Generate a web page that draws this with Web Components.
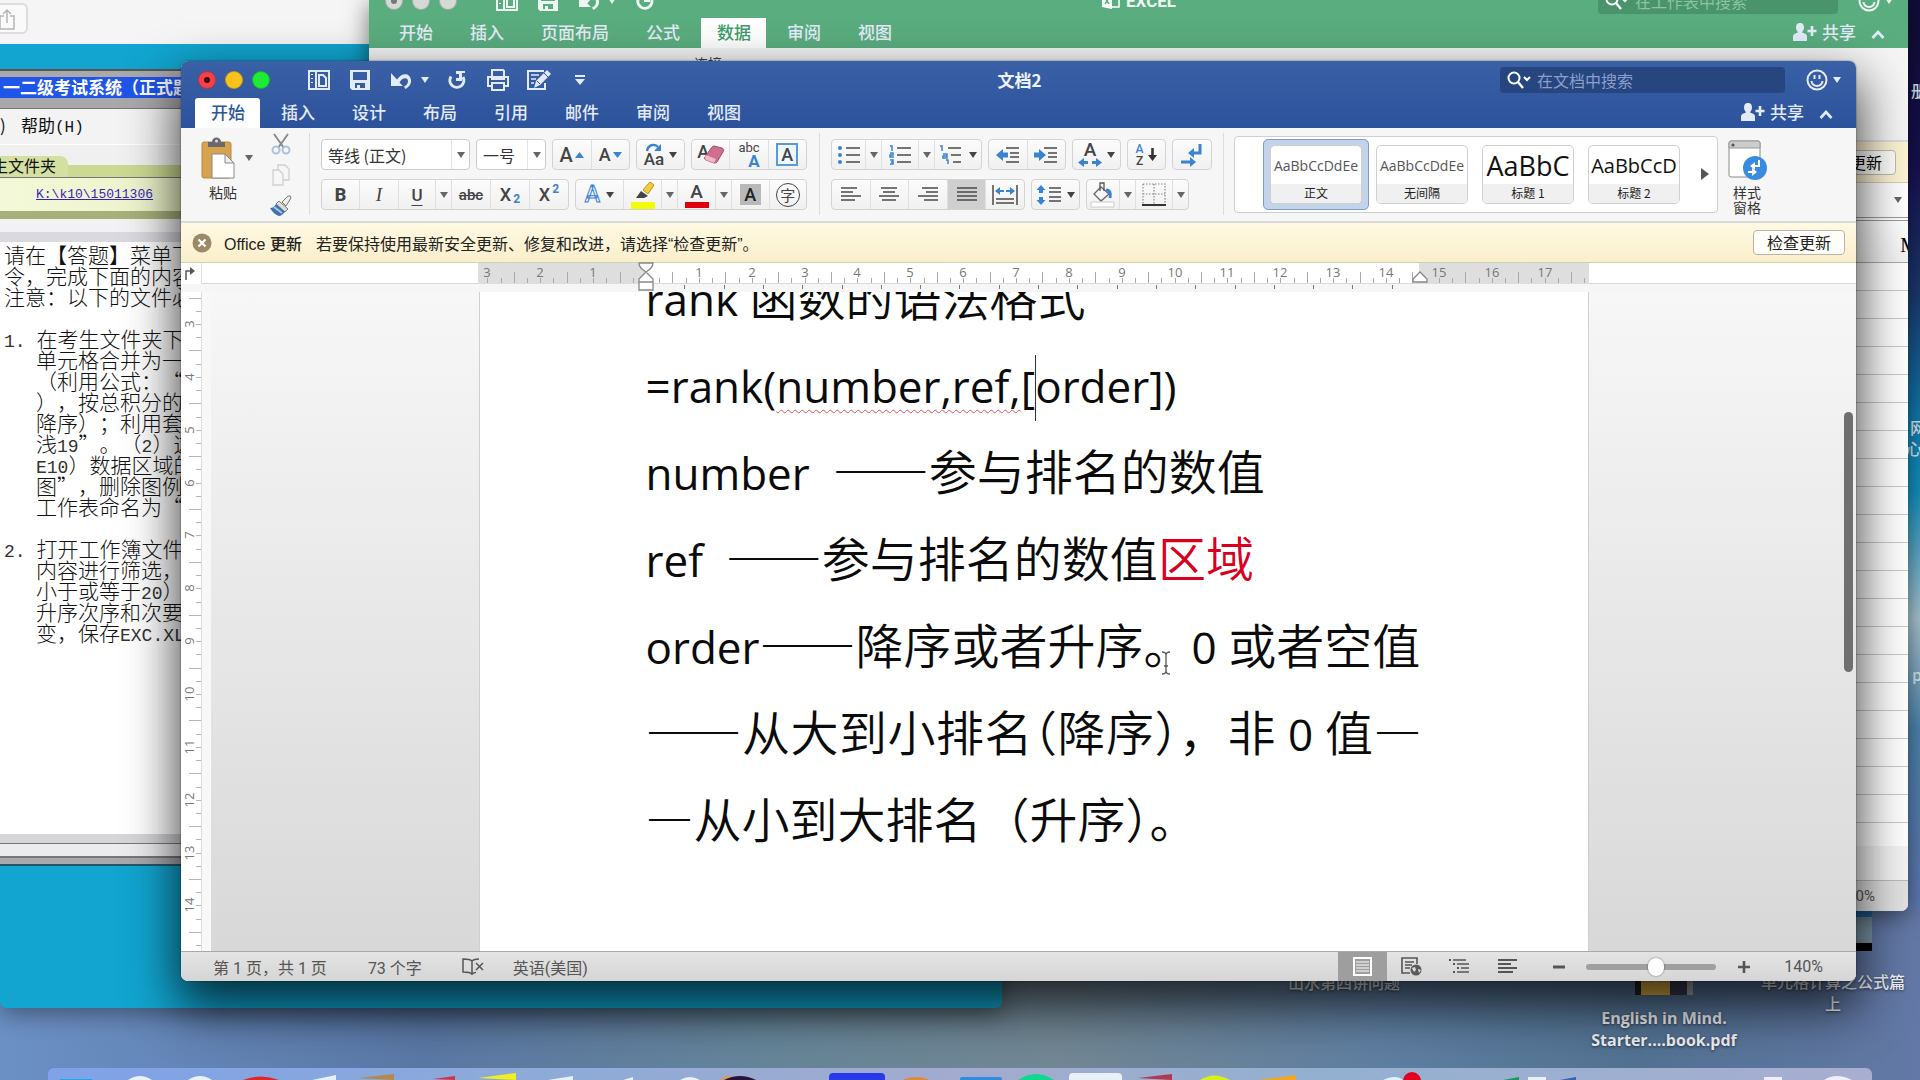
<!DOCTYPE html>
<html lang="zh-CN">
<head>
<meta charset="utf-8">
<title>文档2</title>
<style>
html,body{margin:0;height:100%;overflow:hidden}
body{font-family:"Liberation Sans","Noto Sans CJK SC",sans-serif;background:#5f7f9e}
</style>
</head>
<body>
<mac-desktop></mac-desktop>
<script>
const define=(name,css,html,after)=>{
  const t=document.createElement('template');
  t.innerHTML=`<style>*{box-sizing:border-box}${css}</style>${html}`;
  customElements.define(name,class extends HTMLElement{
    connectedCallback(){
      if(this.shadowRoot)return;
      this.attachShadow({mode:'open'}).appendChild(t.content.cloneNode(true));
      if(after)after.call(this,this.shadowRoot);
    }
  });
};

const B='#3b82d0',D='#4a4a4a';
const lines=(arr,c=D,w=1.6)=>`<path fill="none" stroke="${c}" stroke-width="${w}" d="${arr.map(([x,y,l])=>`M${x} ${y}h${l}`).join('')}"/>`;
/* name: [width, height, markup] */
const ICONS={
  caret:[8,6,`<path d="M0 0h8L4 6z" fill="currentColor"/>`],
  up:[14,9,`<path d="M1.500 8L7 2l5.500 6" fill="none" stroke="currentColor" stroke-width="2.600"/>`],
  more:[10,10,`<path d="M0 1h10" stroke="currentColor" stroke-width="2"/><path d="M0 4h10L5 10z" fill="currentColor"/>`],
  layout:[22,20,`<g fill="none" stroke="currentColor" stroke-width="2"><path d="M1 1h20v18H1zM8 1v18"/><path d="M11 5h4l3 3v8h-7z"/></g><path d="M4 4v1M4 8v1M4 12v1" stroke="currentColor" stroke-width="2"/>`],
  save:[20,20,`<path fill="currentColor" fill-rule="evenodd" d="M0 0h20v20H2l-2-2zM3 2v8h14V2zM5 13v5h2v-3h3v3h5v-5z"/>`],
  undo:[22,18,`<path d="M1 2v13h12L9.500 11.500C12 6 18 6 18 10c0 3-2 4.500-4 5.500l1.500 2.500C19 16 21.500 13 21 9 20 2 12 1 7 8.500z" fill="currentColor"/>`],
  redo:[18,20,`<path d="M3 6.500A7 7 0 1 0 15 7" fill="none" stroke="currentColor" stroke-width="3"/><path d="M8 1h9v2h-3v8H8V8h3V4H8z" fill="currentColor"/>`],
  print:[24,22,`<g fill="none" stroke="currentColor" stroke-width="2"><path d="M6 8V1h11l1 1v6M6 17H2V8h20v9h-4"/><path d="M6 14h12v7H6z"/></g><path d="M5 10h14" stroke="currentColor" stroke-width="2"/>`],
  edit:[26,22,`<path d="M18 2H2v18h17v-6" fill="none" stroke="currentColor" stroke-width="2"/><path d="M5 6h8M5 10h5M5 14h3" stroke="currentColor" stroke-width="1.500"/><path d="M10 12L21 1l4 4-11 11-6 3z" fill="currentColor"/><path d="M11 12l3 3M18 4l4 4" stroke="#2f569d"/>`],
  search:[24,20,`<circle cx="7" cy="8" r="5.500" fill="none" stroke="currentColor" stroke-width="2"/><path d="M11 12l5 6" stroke="currentColor" stroke-width="2.400"/><path d="M17 7l3 3 3-3" fill="none" stroke="currentColor" stroke-width="2"/>`],
  smile:[22,22,`<g fill="none" stroke="currentColor" stroke-width="2"><circle cx="11" cy="11" r="9.500"/><path d="M5.500 12a5.500 5 0 0 0 11 0"/><path d="M8.500 6v4M13.500 6v4"/></g>`],
  person:[24,18,`<path fill="currentColor" d="M7 0c3 0 4 2 4 4.500S9.500 8 9 9.500c3 1 5 1.500 5 4V18H0v-4.500c0-2.500 2-3 5-4C4.500 8 3 7 3 4.500S4 0 7 0z"/><path d="M19 3v10M14.500 8h9" stroke="currentColor" stroke-width="2.600"/>`],
  paste:[34,42,`<rect x="1" y="5" width="29" height="36" rx="2" fill="#d6a350" stroke="#b98a3e"/><path d="M7 10V5h4c0-6 9-6 9 0h4v5z" fill="#69696b"/><circle cx="15.500" cy="4" r="1.500" fill="#ddd"/><path d="M11 17h13l9 9v15H11z" fill="#fff" stroke="#888"/><path d="M24 17v9h9z" fill="#eee" stroke="#888"/>`],
  cut:[20,22,`<path d="M3 1l10 14M17 1L7 15" stroke="#8b8b8b" stroke-width="2"/><g fill="none" stroke="#a9c3dc" stroke-width="2"><circle cx="5" cy="17" r="3.500"/><circle cx="15" cy="17" r="3.500"/></g>`],
  copy:[20,22,`<g fill="#f6f6f6" stroke="#cfcfcf" stroke-width="1.300"><path d="M7 1h7l4 4v11H7z"/><path d="M2 6h6l4 4v11H2z"/></g>`],
  brush:[24,22,`<path d="M13 7l6-6q3-1 3 2l-5 8z" fill="#eee" stroke="#777"/><path d="M10 6l9 8-3 3-9-8z" fill="#ddd" stroke="#777"/><path d="M7 9l9 8c-2 2-4 4-6 4-3-1-7-4-9-8 3 0 5-2 6-4z" fill="#3e72b0"/><path d="M5 12l8 6" stroke="#a9c6e6" stroke-width="2" fill="none"/>`],
  triup:[9,6,`<path d="M0 6h9L4.500 0z" fill="${B}"/>`],
  tridn:[9,6,`<path d="M0 0h9L4.500 6z" fill="${B}"/>`],
  turn:[16,9,`<path d="M1 8C2 2 8 0 12 4" fill="none" stroke="${B}" stroke-width="2.400"/><path d="M15 1v7H8z" fill="${B}"/>`],
  eraser:[22,20,`<path d="M10 2c1-1 1-1 2-1l8 2c2 1 2 2 1 4l-6 10c-1 1-2 1-3 1l-8-3c-2-1-2-2-1-3z" fill="#cf6f8f" stroke="#a34d6d"/><path d="M4 10l10 4-2 4-8-3q-2-2 0-5z" fill="#f2b8c8"/>`],
  marker:[26,28,`<rect x="1" y="21" width="24" height="7" fill="#f4fb08"/><path d="M13 9l7-8 4 3-6 9z" fill="#f2cd3c" stroke="#b98f1a"/><path d="M11 10l7 5-4 2H6z" fill="#444"/>`],
  bullets:[22,18,`<g fill="${B}"><circle cx="2" cy="2" r="2"/><circle cx="2" cy="9" r="2"/><circle cx="2" cy="16" r="2"/></g>${lines([[8,2,14],[8,9,14],[8,16,14]])}`],
  numbers:[21,20,`<path fill="none" stroke="${B}" stroke-width="1.500" d="M0 1h2v5M0 8h3v2H0v2h4M0 15h3v4H0M1 17h2"/>${lines([[7,3,14],[7,10,14],[7,17,14]])}`],
  levels:[22,20,`<path fill="none" stroke="${B}" stroke-width="1.500" d="M0 1h2v5M3 9h4v4H3v-2h4M6 15h2v4"/>${lines([[8,3,13],[11,10,10],[13,17,8]])}`],
  outdent:[24,16,`<path d="M0 8l7-6v3.500h5v5H7V14z" fill="${B}"/>${lines([[10,1,13],[14,6,9],[14,10,9],[10,15,13]])}`],
  indent:[24,16,`<path d="M12 8L5 2v3.500H0v5h5V14z" fill="${B}"/>${lines([[10,1,13],[14,6,9],[14,10,9],[10,15,13]])}`],
  lr:[24,9,`<path d="M0 4.500L6 0v3h4v3H6v3zM24 4.500L18 0v3h-4v3h4v3z" fill="${B}"/>`],
  down:[9,14,`<path d="M3.200 0h2.600v7H9l-4.500 6L0 7h3.200z" fill="#333"/>`],
  marks:[24,24,`<path d="M20 1v9h-8" fill="none" stroke="${B}" stroke-width="3"/><path d="M8 10l6-5v10zM16 19l-6-5v10z" fill="${B}"/><path d="M1 19h11" stroke="${B}" stroke-width="3"/>`],
  left:[20,15,lines([[0,1,16],[0,5,12],[0,9,20],[0,13,14]])],
  center:[20,15,lines([[2,1,16],[4,5,12],[0,9,20],[3,13,14]])],
  right:[20,15,lines([[4,1,16],[8,5,12],[0,9,20],[6,13,14]])],
  just:[20,15,lines([[0,1,20],[0,5,20],[0,9,20],[0,13,20]])],
  dist:[26,20,`<path d="M1 0v20M25 0v20" stroke="${D}" stroke-width="1.500"/><path d="M3 6l5-4v3h4v2H8v3zM23 6l-5-4v3h-4v2h4v3z" fill="${B}"/>${lines([[4,14,18],[4,18,18]])}`],
  spacing:[24,20,`<path d="M4 0l4.500 5H6v3H2V5H-.500zM4 20l4.500-5H6v-3H2v3H-.500z" fill="${B}"/>${lines([[12,3,12],[12,7,12],[12,12,12],[12,16,12]])}`],
  bucket:[26,26,`<path d="M11 5l8 7-8 7-7-7z" fill="#f5f5f5" stroke="#666" stroke-width="1.300"/><path d="M10 9V1h4v8" fill="none" stroke="#555" stroke-width="1.300"/><path d="M16 8c4 0 5 3 4 8" fill="none" stroke="${B}" stroke-width="3"/><path d="M1 20h23v5H1z" fill="#fff" stroke="#ccc"/>`],
  borders:[24,24,`<path d="M1 1h22v20M1 1v20M12 1v20M1 11h22" fill="none" stroke="#888" stroke-width="1.200" stroke-dasharray="1.500 1.500"/><path d="M0 22h24" stroke="#333" stroke-width="2"/>`],
  play:[8,12,`<path d="M0 0l8 6-8 6z" fill="#555"/>`],
  pane:[40,40,`<rect x="1" y="1" width="31" height="36" rx="2" fill="#fff" stroke="#8a8a8a"/><path d="M1 3q0-2 2-2h27q2 0 2 2v5H1z" fill="#ccc" stroke="#999"/><circle cx="5" cy="5" r="1.600" fill="#555"/><circle cx="27" cy="28" r="12" fill="#3a8ae0"/><path d="M31 20v6h-6M20 32h5" fill="none" stroke="#fff" stroke-width="2"/><path d="M27 22v8l-5-4zM24 28l5 4-5 4z" fill="#fff"/>`],
  close:[20,20,`<circle cx="10" cy="10" r="9.500" fill="#9c8a66"/><path d="M6.500 6.500l7 7M13.500 6.500l-7 7" stroke="#fff" stroke-width="2.200"/>`],
  tabstop:[10,14,`<path d="M1 13V4h6" fill="none" stroke="#555" stroke-width="1.500"/><path d="M5 0l5 4-5 4z" fill="#555"/>`],
  proof:[22,18,`<path d="M10 3C8 1 4 1 1 1v13c3 0 7 0 9 2 1-1 2-1.500 4-1.500M10 3v14M10 3c2-2 4-2 7-2" fill="none" stroke="#555" stroke-width="1.500"/><path d="M14 5l7 7M21 5l-7 7" stroke="#555" stroke-width="1.500"/>`],
  vprint:[19,19,`<rect x="1" y="1" width="17" height="17" fill="none" stroke="#fff" stroke-width="2"/><path d="M3 5h13M3 8h13M3 11h13M3 14h13" stroke="#fff"/>`],
  vweb:[21,19,`<path d="M9 16H1V1h15v6" fill="none" stroke="#555" stroke-width="1.600"/><path d="M4 5h9M4 8h7M4 11h5" stroke="#555" stroke-width="1.400"/><circle cx="15" cy="13" r="5.500" fill="#5a5a5a"/><path d="M11 11l3-1 1 3-2 2zM17 12l3 1-2 3z" fill="#ddd"/>`],
  vout:[20,15,`<path d="M0 1h2M4 5h2M8 9h2M4 13h2" stroke="#555" stroke-width="1.800"/>${lines([[4,1,13],[8,5,12],[12,9,8],[8,13,12]],'#555')}`],
  vdraft:[19,15,lines([[0,1,19],[0,5,13],[0,9,19],[0,13,15]],'#555',1.800)],
  minus:[12,4,`<path d="M0 2h12" stroke="#555" stroke-width="3"/>`],
  plus:[12,12,`<path d="M0 6h12M6 0v12" stroke="#555" stroke-width="2.600"/>`],
  share:[16,22,`<path d="M4 8H0v13h14V8h-4M7 15V2M3 6l4-4 4 4" fill="none" stroke="#b5b5b5" stroke-width="1.500"/>`],
  ibeam:[10,24,`<path d="M1 1q4 0 4 3v16q0 3-4 3M9 1q-4 0-4 3M9 23q-4 0-4-3M3 15h4" fill="none" stroke="#555" stroke-width="1.300"/>`],
  xl:[18,16,`<path d="M0 2l10-2v16L0 14z" fill="#fff"/><path d="M10 2h7v12h-7" fill="none" stroke="#fff" stroke-width="1.500"/><path d="M3 5l4 6M7 5l-4 6" stroke="#5aad7f" stroke-width="1.500"/>`]
};
define('ui-icon',`:host{display:inline-flex;flex:none}svg{display:block;overflow:visible}`,``,function(r){
  const [w,h,m]=ICONS[this.getAttribute('name')];
  r.innerHTML+=`<svg width="${w}" height="${h}" viewBox="0 0 ${w} ${h}" aria-hidden="true">${m}</svg>`;
});
const ic=n=>`<ui-icon name="${n}"></ui-icon>`;

define('traffic-lights',`:host{display:flex;gap:9px}
i{width:18px;height:18px;border-radius:50%;border:1px solid #0003;display:grid;place-items:center}
i:nth-of-type(1){background:#f2414c}i:nth-of-type(2){background:#fcc21b}i:nth-of-type(3){background:#1fea35}
i b{width:6px;height:6px;border-radius:50%;background:#4a0508}
:host([off]) i{background:#d5d9d6}:host([off]) b{background:#777}`,`<i><b></b></i><i></i><i></i>`);

define('search-box',`:host{display:flex;align-items:center;height:26px;border-radius:4px;background:var(--sb);padding-left:7px;gap:6px;color:#fff}
input{flex:1;min-width:0;border:0;background:none;font:16px "Noto Sans CJK SC",sans-serif;color:#fff;outline:0;padding:0}
input::placeholder{color:var(--ph);opacity:1}`,`${ic('search')}<input type="search" aria-label="搜索">`,function(r){r.querySelector('input').placeholder=this.getAttribute('hint')});

define('ribbon-tabs',`:host{display:flex;align-items:flex-end;height:30px}
nav{display:flex}
button{border:0;background:none;color:#e4ebf8;font:500 17px/28px "Noto Sans CJK SC",sans-serif;height:30px;padding:0 0 2px;margin-right:37px;white-space:nowrap}
button.on{background:#fff;color:var(--tab);padding:0 15px 2px 16px;margin:0 21px 0 -16px}
button.on.first{margin-left:0;border-radius:3px 3px 0 0}
.share{margin-left:auto;display:flex;align-items:center;gap:5px;margin-right:15px}
.share+button{margin-right:23px}`,`<nav></nav><button class="share">${ic('person')}<span>共享</span></button><button aria-label="折叠功能区">${ic('up')}</button>`,function(r){
  const on=this.getAttribute('on');
  r.querySelector('nav').innerHTML=this.getAttribute('tabs').split(' ').map((t,i)=>`<button class="${t===on?'on':''}${i?'':' first'}">${t}</button>`).join('');
});

define('tool-group',`:host{display:flex;height:31px;border:1px solid #d3d3d3;border-radius:4px;background:linear-gradient(#fcfcfc,#f0f0f0);overflow:hidden}
::slotted(button){border:0;border-right:1px solid #e0e0e0;background:none;padding:0;display:flex;align-items:center;justify-content:center;gap:2px;color:#444;height:100%;flex:1}
::slotted(button:last-child){border-right:0}::slotted(.c){flex:0 0 16px;color:#666}::slotted(.on){background:#cfcfcf}`,`<slot></slot>`);

define('combo-box',`:host{display:flex;position:relative;height:31px;border:1px solid #ccc;border-radius:4px;background:#fff;align-items:center;color:#666}
select{appearance:none;border:0;background:none;font:16px "Noto Sans CJK SC",sans-serif;color:#333;padding:0 0 0 6px;flex:1;min-width:0;height:100%;outline:0}
i{width:18px;height:100%;border-left:1px solid #e4e4e4;display:grid;place-items:center;pointer-events:none}`,`<select></select><i>${ic('caret')}</i>`,function(r){
  const s=r.querySelector('select');s.setAttribute('aria-label',this.getAttribute('label'));s.add(new Option(this.getAttribute('value')));
});

define('style-card',`:host{display:block;padding:5px 6px;border:1px solid transparent;border-radius:5px;width:106px;height:71px}
:host([on]){background:#c3d3ea;border-color:#7d9cc9}
button{width:100%;height:100%;border:1px solid #cfcfcf;border-radius:5px;background:#fff;padding:0;display:flex;flex-direction:column;overflow:hidden;color:#222}
.s{flex:1;display:flex;align-items:center;justify-content:center;font-family:"Open Sans","Noto Sans CJK SC",sans-serif;white-space:nowrap;width:100%;overflow:hidden}
.l{height:19px;width:100%;background:#f0f0f0;font:12px/18px "Noto Sans CJK SC",sans-serif}`,`<button><span class="s"></span><span class="l"></span></button>`,function(r){
  const s=r.querySelector('.s');s.textContent=this.getAttribute('sample');s.style.fontSize=this.getAttribute('size')+'px';s.style.fontWeight=this.getAttribute('weight')||400;s.style.color=this.hasAttribute('weight')?'#111':'#555';
  r.querySelector('.l').textContent=this.getAttribute('name');
});

define('word-ribbon',`:host{display:flex;height:95px;background:#f6f6f6;border-bottom:2px solid #d9d9d9;padding:5px 0 0 20px;font-family:"Noto Sans CJK SC",sans-serif}
button{font-family:"Noto Sans CJK SC",sans-serif}
.plain{border:0;background:none;padding:0;color:#333}
.paste{display:flex;align-items:center;gap:10px;margin-top:4px;height:42px;color:#666}
.col{display:flex;flex-direction:column}
.t{font-size:14px;line-height:15px;color:#333}
.clip{width:69px}.clip .t{margin:4px 0 0 8px;line-height:18px}
.edit{width:22px;gap:9px;align-items:center}
.edit button{height:22px;display:flex}
hr{border:0;width:1px;height:82px;background:#dcdcdc;margin:0 11px 0 0}
.rows{display:flex;flex-direction:column;gap:9px;padding-top:6px}
.row{display:flex;gap:6px}
.big{font:500 20px/24px Roboto,sans-serif}
.mid{font:500 18px/24px Roboto,sans-serif}
sub,sup{font:700 12px/12px Roboto,sans-serif;color:#3b82d0}sub{align-self:flex-end;margin-bottom:4px}sup{align-self:flex-start;margin-top:3px}
.st{display:flex;flex-direction:column;align-items:center}
.gal{display:flex;align-items:center;background:#fff;border:1px solid #cfcfcf;border-radius:4px;height:77px;margin-top:3px;width:484px;padding-left:28px}
.gal .plain{margin-left:14px}
.pane{margin:7px 0 0 10px;width:40px;align-items:center}.pane .t{width:30px;margin-top:5px}
`,`
<div class="col clip"><button class="plain paste" aria-label="粘贴">${ic('paste')}${ic('caret')}</button><span class="t">粘贴</span></div>
<div class="col edit"><button class="plain" aria-label="剪切">${ic('cut')}</button><button class="plain" aria-label="复制">${ic('copy')}</button><button class="plain" aria-label="格式刷">${ic('brush')}</button></div>
<hr style="margin-left:17px">
<div class="rows">
 <div class="row">
  <combo-box style="width:149px" label="字体" value="等线 (正文)"></combo-box><combo-box style="width:70px" label="字号" value="一号"></combo-box>
  <tool-group style="width:78px"><button><span class="big">A</span>${ic('triup')}</button><button><span class="mid">A</span>${ic('tridn')}</button></tool-group>
  <tool-group style="width:49px"><button style="gap:5px"><span class="st">${ic('turn')}<span style="font:500 17px/14px Roboto,sans-serif">Aa</span></span>${ic('caret')}</button></tool-group>
  <tool-group style="width:116px"><button style="gap:0"><span class="mid" style="margin-right:-7px;align-self:flex-start">A</span>${ic('eraser')}</button><button><span class="st" style="font:13px/12px Roboto,sans-serif">abc<b style="font:700 17px/14px Roboto,sans-serif;color:#3b82d0;align-self:flex-end">A</b></span></button><button><span style="border:2px solid #5b9ad8;background:#eef6fd;font:500 18px/19px Roboto,sans-serif;width:22px">A</span></button></tool-group>
 </div>
 <div class="row">
  <tool-group style="width:248px"><button style="flex:0 0 38px"><b style="font:800 18px Roboto,sans-serif">B</b></button><button style="flex:0 0 39px"><i style="font:italic 500 19px 'Liberation Serif',serif">I</i></button><button style="flex:0 0 37px"><u style="font:500 17px Roboto,sans-serif;text-underline-offset:4px">U</u></button><button class="c">${ic('caret')}</button><button style="flex:0 0 39px"><s style="font:500 15px Roboto,sans-serif">abc</s></button><button style="flex:0 0 39px"><span class="mid">X</span><sub>2</sub></button><button><span class="mid">X</span><sup>2</sup></button></tool-group>
  <tool-group style="width:232px"><button style="flex:0 0 48px;gap:6px"><span style="font:500 23px Roboto,sans-serif;color:#f4faff;-webkit-text-stroke:1px #3b82d0">A</span>${ic('caret')}</button><button style="flex:0 0 38px">${ic('marker')}</button><button class="c">${ic('caret')}</button><button style="flex:0 0 38px"><span style="font:500 19px/20px Roboto,sans-serif;border-bottom:6px solid #e00010;width:24px">A</span></button><button class="c">${ic('caret')}</button><button><span style="background:#b9b9b9;font:500 18px/21px Roboto,sans-serif;width:21px;color:#222">A</span></button><button><span style="border:1px solid #444;border-radius:50%;width:24px;height:24px;font-size:15px;line-height:21px">字</span></button></tool-group>
 </div>
</div>
<hr style="margin-left:12px">
<div class="rows">
 <div class="row">
  <tool-group style="width:151px"><button style="flex:0 0 34px">${ic('bullets')}</button><button class="c">${ic('caret')}</button><button style="flex:0 0 37px">${ic('numbers')}</button><button class="c">${ic('caret')}</button><button style="gap:7px">${ic('levels')}${ic('caret')}</button></tool-group>
  <tool-group style="width:78px"><button>${ic('outdent')}</button><button>${ic('indent')}</button></tool-group>
  <tool-group style="width:49px"><button style="gap:5px"><span class="st"><span style="font:500 19px/16px Roboto,sans-serif">A</span>${ic('lr')}</span>${ic('caret')}</button></tool-group>
  <tool-group style="width:39px"><button style="gap:5px"><span class="st" style="font:500 12px/12px Roboto,sans-serif"><span style="color:#3b82d0">A</span><span>Z</span></span>${ic('down')}</button></tool-group>
  <tool-group style="width:40px"><button>${ic('marks')}</button></tool-group>
 </div>
 <div class="row">
  <tool-group style="width:194px"><button>${ic('left')}</button><button>${ic('center')}</button><button>${ic('right')}</button><button class="on">${ic('just')}</button><button>${ic('dist')}</button></tool-group>
  <tool-group style="width:49px"><button style="gap:6px">${ic('spacing')}${ic('caret')}</button></tool-group>
  <tool-group style="width:103px"><button style="flex:0 0 33px">${ic('bucket')}</button><button class="c">${ic('caret')}</button><button style="flex:0 0 37px">${ic('borders')}</button><button class="c">${ic('caret')}</button></tool-group>
 </div>
</div>
<hr style="margin-left:11px;margin-right:10px">
<div class="gal"><style-card on sample="AaBbCcDdEe" size="14" name="正文"></style-card><style-card sample="AaBbCcDdEe" size="14" name="无间隔"></style-card><style-card sample="AaBbC" size="27" weight="500" name="标题 1"></style-card><style-card sample="AaBbCcD" size="20" weight="400" name="标题 2"></style-card><button class="plain" aria-label="更多样式">${ic('play')}</button></div>
<div class="col pane">${ic('pane')}<span class="t">样式窗格</span></div>`);

define('word-title',`:host{display:grid;grid-template-columns:1fr auto 1fr;height:37px;align-items:center;color:#e4ebf8;padding:0 15px 0 17px}
.q{display:flex;align-items:center}.q button{border:0;background:none;padding:0;color:inherit;display:flex;align-items:center}
h1{font:700 17px/22px "Noto Sans CJK SC",sans-serif;margin:0;color:#f0f4fc}
.r{justify-content:flex-end}search-box{--sb:#27457f;--ph:#8b9fc8;width:285px;margin-right:21px}`,`
<div class="q"><traffic-lights></traffic-lights><button style="margin-left:38px">${ic('layout')}</button><button style="margin-left:20px">${ic('save')}</button><button style="margin-left:20px;gap:9px">${ic('undo')}${ic('caret')}</button><button style="margin-left:19px">${ic('redo')}</button><button style="margin-left:20px">${ic('print')}</button><button style="margin-left:16px">${ic('edit')}</button><button style="margin-left:23px">${ic('more')}</button></div>
<h1>文档2</h1>
<div class="q r"><search-box hint="在文档中搜索"></search-box><button style="gap:5px">${ic('smile')}${ic('caret')}</button></div>`);

define('update-bar',`:host{display:flex;align-items:center;height:40px;background:linear-gradient(#fff9e3,#faefcb);border-bottom:1px solid #d5cfb8;padding:0 11px 0 11px;font:16px "Liberation Sans","Noto Sans CJK SC",sans-serif;color:#222}
strong{font-weight:500;margin:0 14px 0 12px}p{margin:0;flex:1}
button{width:92px;height:25px;border:1px solid #b9b6a8;border-radius:4px;background:#fffefa;padding:0;font:16px/21px "Noto Sans CJK SC",sans-serif;color:#222}`,`${ic('close')}<strong>Office 更新</strong><p>若要保持使用最新安全更新、修复和改进，请选择“检查更新”。</p><button>检查更新</button>`);

const PITCH=52.86;
define('h-ruler',`:host{display:flex;height:29px;background:#f6f6f6}
.c{width:21px;height:21px;padding:4px 0 0 4px;background:#fff;border-right:1px solid #e3e3e3}
.m{flex:1;height:21px;background:#fff;border-bottom:1px solid #d9d9d9;padding-left:9px;display:flex;justify-content:center}
svg{overflow:visible;display:block}`,`<div class="c">${ic('tabstop')}</div><div class="m"></div>`,function(r){
  const z=168;let s=`<path d="M0 0h${z}v21H0zM${z+773} 0h170v21h-170z" fill="#dedede"/>`,k='';
  for(let q=-12;q<72;q++){const x=Math.round(z+q*PITCH/4);if(x<1||x>1110)continue;
    k+=`M${x}.500 ${q%4===2||q%4===-2?9:15}V20`;
    if(q%4===0&&q)s+=`<text x="${x}" y="14">${Math.abs(q/4)}</text>`;}
  s+=`<path d="${k}" stroke="#aaa" fill="none"/>`;
  let t='';for(let i=1;i<20;i++)t+=`M${Math.round(z-1+i*39.300)}.500 22v4`;
  s+=`<path d="${t}" stroke="#777"/><g fill="#fff" stroke="#888" stroke-width="1.300"><path d="M${z-7} 0h14q0 5-7 9q-7-4-7-9zM${z-7} 19v-3l7-7 7 7v3zM${z-7} 19h14v8h-14zM${z+767} 19v-3l7-7 7 7v3z"/></g>`;
  r.querySelector('.m').innerHTML=`<svg width="1112" height="21" font-family="Open Sans" font-size="13" fill="#777" text-anchor="middle">${s}</svg>`;
});
define('v-ruler',`:host{display:block;width:30px;background:linear-gradient(90deg,#fff 0 20px,#ddd 20px 21px,#f8f8f8 21px);overflow:hidden}svg{display:block}`,``,function(r){
  let s='',k='';
  for(let q=-2;q<50;q++){const y=Math.round(32+q*PITCH/4);if(y<2)continue;
    k+=`M${q%4===2||q%4===-2?8:15} ${y}.500H20`;
    if(q%4===0&&y<640)s+=`<text transform="translate(13 ${y}) rotate(-90)">${3+q/4}</text>`;}
  r.innerHTML+=`<svg width="21" height="658" font-family="Open Sans" font-size="13" fill="#777" text-anchor="middle"><path d="${k}" stroke="#b5b5b5"/>${s}</svg>`;
});

define('word-page',`:host{display:block;width:1110px;background:#fff;border:solid #cfcfcf;border-width:0 1px;overflow:hidden;color:#0b0b0b;padding-left:166px}
div{margin-top:-40px}
p{margin:0;height:87px;width:776px;font:350 48px/87px "Noto Sans CJK SC DemiLight","Noto Sans CJK SC",sans-serif;white-space:pre}
i{font:400 44px/80px "Open Sans",sans-serif}
.w{text-decoration:underline wavy #e0525c 1px;text-underline-offset:6px;text-decoration-skip-ink:none}
.red{color:#d8001c}
.j{font-feature-settings:"halt"}
.cur{display:inline-block;width:1px;height:66px;margin-right:-1px;background:#333;vertical-align:-18px}
.full{white-space:nowrap;text-align:justify;text-align-last:justify}`,`<div><p><i>rank </i>函数的语法格式</p><p><i>=rank(<span class="w">number,ref,</span>[<span class="cur"></span>order])</i></p><p><i>number  </i>——参与排名的数值</p><p><i>ref  </i>——参与排名的数值<span class="red">区域</span></p><p><i>order</i>——降序或者升序。<i>0 </i>或者空值</p><p class="full">——从大到小排名<span class="j">（</span>降序），非<i> 0 </i>值—</p><p>—从小到大排名（升序）。</p></div>`);

define('word-status',`:host{display:flex;align-items:center;height:30px;background:linear-gradient(#e4e4e4,#d5d5d5);border-top:1px solid #a8a8a8;font:16px "Roboto","Noto Sans CJK SC",sans-serif;color:#555;padding:0 33px 0 32px;white-space:nowrap}
.v{display:flex;margin-left:auto;height:100%}.v button,.z{border:0;background:none;padding:0;display:grid;place-items:center;width:48px;height:100%}.v .on{background:#9e9e9e;width:49px}
.z{width:28px}
input{appearance:none;width:130px;height:20px;background:none}
input::-webkit-slider-runnable-track{height:6px;border-radius:3px;background:#9f9f9f}
input::-webkit-slider-thumb{appearance:none;width:16px;height:18px;border-radius:9px;background:#fff;margin-top:-6px;box-shadow:0 0 2px #0008}`,`
<span>第 1 页，共 1 页</span><span style="margin-left:41px">73 个字</span><span style="margin:0 29px 0 40px;display:flex">${ic('proof')}</span><span>英语(美国)</span>
<div class="v"><button class="on">${ic('vprint')}</button><button>${ic('vweb')}</button><button>${ic('vout')}</button><button>${ic('vdraft')}</button></div>
<button class="z" style="margin-left:14px" aria-label="缩小">${ic('minus')}</button><input type="range" min="0" max="100" value="54" aria-label="缩放" style="margin:0 14px 0 13px"><button class="z" aria-label="放大">${ic('plus')}</button><span style="margin-left:26px">140%</span>`);

define('word-window',`:host{display:flex;flex-direction:column;border-radius:7px;overflow:hidden;background:#fff;box-shadow:0 0 2px #0008,0 22px 50px 4px #000b}
header{background:linear-gradient(#3a60a6,#2c529c)}
ribbon-tabs{--tab:#2b579a;padding-left:14px}
.doc{flex:1;display:flex;min-height:0;position:relative}
.canvas{flex:1;background:linear-gradient(#f7f7f7,#d8d8d8);display:flex;justify-content:center}
.bar{position:absolute;right:3px;top:120px;width:9px;height:260px;border-radius:5px;background:#6f6f6f}
.ib{position:absolute;left:980px;top:359px}`,`
<header><word-title></word-title><ribbon-tabs on="开始" tabs="开始 插入 设计 布局 引用 邮件 审阅 视图"></ribbon-tabs></header>
<word-ribbon></word-ribbon><update-bar></update-bar><h-ruler></h-ruler>
<div class="doc"><v-ruler></v-ruler><div class="canvas"><word-page></word-page></div><div class="bar"></div><div class="ib">${ic('ibeam')}</div></div>
<word-status></word-status>`);

define('excel-window',`:host{display:flex;flex-direction:column;background:#fff;border-radius:0 0 7px 7px;overflow:hidden;box-shadow:0 4px 24px #0008}
header{background:#5aad7f;height:48px}
.t{display:grid;grid-template-columns:1fr auto 1fr;align-items:center;height:30px;margin-top:-14px;color:#eef7f1;padding:0 15px 0 16px}
.q{display:flex;align-items:center}
.l ui-icon{margin-left:20px}
.l .u{margin-left:8px}
h2{margin:0;font:700 17px/20px Roboto,sans-serif;display:flex;gap:6px;align-items:center}
search-box{--sb:#4a946b;--ph:#8cc4a4;width:240px;margin-right:20px}
ribbon-tabs{--tab:#3f9c69;padding-left:30px;margin-top:2px}
.rib{height:94px;background:#f5f5f5;border-bottom:2px solid #ddd;padding:5px 0 0 325px;font:14px/20px "Noto Sans CJK SC",sans-serif;color:#444}
.y{height:41px;background:#fdf4d3;border-bottom:1px solid #d5cfb8;display:flex;justify-content:flex-end;align-items:center;padding-right:12px}
.y button{width:92px;height:25px;border:1px solid #bbb;border-radius:4px;background:#fffefa;font:16px/21px "Noto Sans CJK SC",sans-serif;padding:0}
.f{height:38px;border-bottom:4px double #999;display:flex;justify-content:flex-end;align-items:center;padding-right:6px;color:#666}
.h{height:42px;border-bottom:1px solid #aaa;text-align:right;font:20px/48px "Liberation Serif",serif;background:linear-gradient(#fff,#f3f3f3);overflow:hidden;margin-right:-10px}
.g{flex:1;background:repeating-linear-gradient(#fff 0 27px,#c9c9c9 27px 28px)}
.s{height:65px;background:linear-gradient(#f4f4f4 0 34px,#bbb 34px 35px,#e2e2e2 35px);text-align:right;font:15px/20px Roboto,sans-serif;color:#555;padding:40px 33px 0 0}`,`
<header><div class="t"><div class="q l"><traffic-lights off></traffic-lights><ui-icon style="margin-left:39px" name="layout"></ui-icon>${ic('save')}${ic('undo')}<ui-icon class="u" name="caret"></ui-icon>${ic('redo')}</div><h2>${ic('xl')}EXCEL</h2><div class="q" style="justify-content:flex-end"><search-box hint="在工作表中搜索"></search-box>${ic('smile')}<ui-icon style="margin-left:5px" name="caret"></ui-icon></div></div>
<ribbon-tabs on="数据" tabs="开始 插入 页面布局 公式 数据 审阅 视图"></ribbon-tabs></header>
<div class="rib">连接</div><div class="y"><button>检查更新</button></div><div class="f">${ic('caret')}</div><div class="h">M</div><div class="g"></div><div class="s">140%</div>`);

define('exam-window',`:host{display:flex;flex-direction:column;background:#11a5d0;box-shadow:0 6px 24px #0006;border-radius:0 0 6px 6px;overflow:hidden;font-family:"Noto Sans CJK SC",sans-serif;color:#111}
.top{height:44px;background:#f5f5f5;flex:none;padding-top:3px}
.sh{width:28px;height:31px;border:2px solid #ddd;border-left:0;border-radius:0 6px 6px 0;background:#fafafa;overflow:hidden;padding:3px 0 0}
.xp{margin-top:25px;width:460px;border-top:2px solid #555;height:797px;background:#a9a9ac;display:flex;flex-direction:column;border-bottom:2px solid #23586a;flex:none}
.xp>*{flex:none}
.ti{height:21px;margin:6px 0 10px;background:#1f55e8;color:#fff;font:700 17px/20px "Noto Sans CJK SC",sans-serif;white-space:nowrap;overflow:hidden;padding-left:3px;text-spacing-trim:space-all}
.me{height:36px;background:#f3f3f3;border-top:1px solid #777;font-size:17px;line-height:31px;white-space:pre;overflow:hidden}
.me i{font:16px "Liberation Mono",monospace}
.tab{height:33px;border-top:1px solid #fff;background:linear-gradient(#f0f0f0 0 20px,#cbd993 20px)}
.tab span{display:block;width:68px;height:21px;line-height:18px;font-size:16px;background:#d3e0a2;border-radius:0 8px 0 0;margin-top:11px;text-indent:-8px;overflow:hidden}
.k{height:42px;border-top:1px solid #777;border-bottom:8px solid #a7b07a;background:linear-gradient(90deg,#f3f9d8,#dfe8b0);padding:8px 0 0 36px;font:13px/18px "Liberation Mono",monospace}
a{color:#3a1fc0}
.sp{height:23px;background:linear-gradient(#f2f2f2 0 13px,#d9d9df 13px)}
.b{background:#fff;height:592px;font-weight:300;padding-top:2px;text-spacing-trim:space-all}
.b div{display:grid;grid-template-rows:repeat(19,21px);font-size:21px;line-height:21px;white-space:pre}
.b p{margin:0;padding-left:4px}.b p.n{padding-left:36px}.b i{font:18px/18px "Liberation Mono",monospace;color:#333}
.f{height:24px;background:linear-gradient(#d6d6d9 0 9px,#777 9px 10px,#ececf0 10px 22px,#777 22px)}
`,`<div class="top"><div class="sh">${ic('share')}</div></div>
<div class="xp"><div class="ti">一二级考试系统（正式题）</div><div class="me">)    帮助<i>(H)</i></div><div class="tab"><span>生文件夹</span></div><div class="k"><a href="#">K:\\k10\\15011306</a></div><div class="sp"></div>
<div class="b"><div><p>请在【答题】菜单下</p><p>令，完成下面的内容</p><p>注意：以下的文件必</p><p> </p><p><i>1. </i>在考生文件夹下</p><p class="n">单元格合并为一</p><p class="n">（利用公式：“</p><p class="n">），按总积分的</p><p class="n">降序）；利用套</p><p class="n">浅<i>19</i>”。（<i>2</i>）这</p><p class="n"><i>E10</i>）数据区域的</p><p class="n">图”，删除图例</p><p class="n">工作表命名为“</p><p> </p><p><i>2. </i>打开工作簿文件</p><p class="n">内容进行筛选，</p><p class="n">小于或等于<i>20</i>）</p><p class="n">升序次序和次要</p><p class="n">变，保存<i>EXC.XLS</i></p></div></div><div class="f"></div></div>`);

define('mac-dock',`:host{display:flex;background:linear-gradient(90deg,#7fa2e8,#8fabd6 30%,#a3abce 50%,#93b0d0 70%,#a8aed0);border-radius:6px 6px 0 0;height:12px;overflow:hidden}svg{width:100%;height:12px;display:block}`,`
<svg viewBox="0 0 1824 12" preserveAspectRatio="none"><path d="M12 12h32v-1H12z" fill="#17aee8"/><g fill="#e8f0f8"><path d="M80 12q12-8 24 0zM140 12q12-8 24 0zM264 12l24-5v5zM500 12l25-4v4zM575 12l10-3v3z"/><path d="M632 12q10-6 20 0z"/><rect x="1021" y="5" width="53" height="10" rx="4"/><path d="M1480 9h18v3h-18z"/></g><path d="M195 12q18-7 36 0z" fill="#e0262c"/><path d="M310 10l36-4v6z" fill="#b4894a"/><path d="M385 11l22-3v4z" fill="#d3304a"/><path d="M430 10l38-5v7z" fill="#f1ef20"/><path d="M672 12q8-7 14-2z" fill="#e09a4a"/><path d="M676 12q16-8 32 0z" fill="#2b1238"/><rect x="781" y="5" width="56" height="10" rx="4" fill="#2739e8"/><path d="M854 12q14-6 28 0z" fill="#e0883a"/><rect x="912" y="9" width="42" height="6" rx="2" fill="#2e8de0"/><path d="M970 12q18-12 36 0z" fill="#0fd88c"/><path d="M1090 10l34-4v6z" fill="#b0384f"/><path d="M1152 12q14-9 30 0z" fill="#d8f01a"/><path d="M1210 12l38-5v5z" fill="#f0a820"/><path d="M1335 12q13-6 20 0z" fill="#dff2fb"/><circle cx="1364" cy="13" r="9" fill="#e00020"/><path d="M1455 12l16-3v3z" fill="#16995a"/><path d="M1512 12l16-3v3z" fill="#3763b0"/><rect x="1716" y="9" width="18" height="4" fill="#eef"/><path d="M1776 12q12-8 28 0z" fill="#eef"/></svg>`);

define('desktop-label',`:host{display:block;text-align:center;font:700 16px/22px "Open Sans","Noto Sans CJK SC",sans-serif;color:#eef1f5;text-shadow:0 1px 3px #0009}`,`<slot></slot>`);

define('mac-desktop',`:host{display:block;position:relative;height:100vh;overflow:hidden;background:linear-gradient(90deg,#6b90c4,#5a78a6 22%,#668599 40%,#728794 55%,#5f7fa2 72%,#527292 85%,#6378a6)}
:host>*{position:absolute}
.edge{right:0;top:0;width:40px;bottom:170px;background:linear-gradient(#120c38 0,#181252 18%,#1c3a70 32%,#0f84b8 48%,#1590c0 54%,#a9c6d2 68%,#4f86b0 80%,#5f79b4)}
.strip{right:0;width:16px;overflow:hidden;color:#dfe8ee;font:500 16px/20px "Noto Sans CJK SC",sans-serif;white-space:nowrap;direction:rtl}
exam-window{left:0;top:0;width:1002px;bottom:72px}
excel-window{left:369px;right:12px;top:0;bottom:169px}
word-window{left:181px;right:64px;top:61px;bottom:99px}
mac-dock{left:48px;right:48px;bottom:0}
.p1{right:48px;width:20px;top:905px;height:46px;background:linear-gradient(#2a6fae 0 12px,#7d97a8 12px 38px,#000 38px)}
.p2{right:227px;width:58px;top:960px;height:35px;background:linear-gradient(90deg,#222 10%,#e3b341 10% 60%,#3a3a52 60% 90%,#aaa 90%)}`,`
<div class="edge"></div>
<div class="strip" style="top:80px;right:-7px">注册</div><div class="strip" style="top:417px;right:-6px">网</div><div class="strip" style="top:438px;right:-2px">心</div><div class="strip" style="top:664px;right:-2px">p</div>
<desktop-label style="right:506px;top:972px;width:140px;font-weight:500">山水第四讲问题</desktop-label>
<div class="p1"></div><div class="p2"></div>
<desktop-label style="right:176px;top:1007px;width:160px">English in Mind.<br>Starter....book.pdf</desktop-label>
<desktop-label style="right:7px;top:971px;width:160px;font-weight:500">单元格计算之公式篇<br>上</desktop-label>
<exam-window></exam-window><excel-window></excel-window><mac-dock></mac-dock><word-window></word-window>`);
</script>
</body>
</html>
